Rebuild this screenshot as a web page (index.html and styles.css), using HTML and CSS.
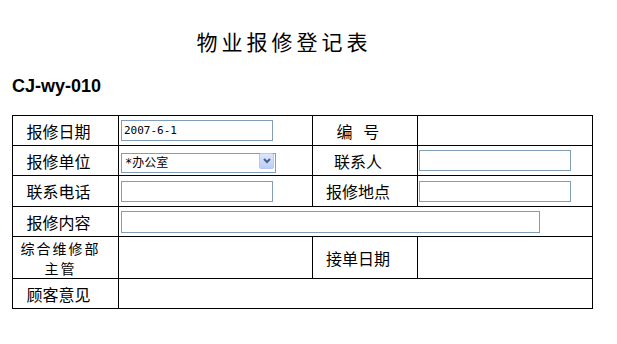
FILE: index.html
```html
<!DOCTYPE html>
<html lang="zh-CN">
<head>
    <meta charset="UTF-8">
    <title>物业报修登记表</title>
    <link rel="stylesheet" href="styles.css">
</head>
<body>
    <div class="page">
        <div class="title">物业报修登记表</div>
        <div class="code">CJ-wy-010</div>
        <table class="form-table">
            <colgroup>
                <col class="c1"><col class="c2"><col class="c3"><col class="c4">
            </colgroup>
            <tr>
                <td class="label">报修日期</td>
                <td class="field"><input class="txt" type="text" value="2007-6-1"></td>
                <td class="label">编&nbsp;&nbsp;&nbsp;号</td>
                <td class="field"></td>
            </tr>
            <tr>
                <td class="label">报修单位</td>
                <td class="field">
                    <span class="select-wrap">
                        <select class="sel">
                            <option>*办公室</option>
                        </select>
                        <span class="sel-btn">
                            <svg width="8" height="6" viewBox="0 0 8 6"><path d="M1 1 L4 4 L7 1" fill="none" stroke="#4d6185" stroke-width="2"/></svg>
                        </span>
                    </span>
                </td>
                <td class="label">联系人</td>
                <td class="field right"><input class="txt" type="text"></td>
            </tr>
            <tr class="tall1">
                <td class="label">联系电话</td>
                <td class="field"><input class="txt" type="text"></td>
                <td class="label">报修地点</td>
                <td class="field right"><input class="txt" type="text"></td>
            </tr>
            <tr>
                <td class="label">报修内容</td>
                <td class="field" colspan="3"><input class="txt wide" type="text"></td>
            </tr>
            <tr class="tall2">
                <td class="label multi">综合维修部<br>主管</td>
                <td class="field"></td>
                <td class="label">接单日期</td>
                <td class="field"></td>
            </tr>
            <tr>
                <td class="label">顾客意见</td>
                <td class="field" colspan="3"></td>
            </tr>
        </table>
    </div>
</body>
</html>
```

FILE: styles.css
```css
body {
    margin: 0;
    background: #fff;
    color: #000;
    font-family: "Noto Sans CJK SC", sans-serif;
}
.page {
    padding: 0 25px 0 12px;
}
.title {
    margin-top: 28px;
    height: 26px;
    line-height: 26px;
    font-size: 21px;
    letter-spacing: 4px;
    text-align: center;
    padding-right: 36px;
}
.code {
    margin-top: 22px;
    height: 20px;
    line-height: 20px;
    font-family: "Liberation Sans", Arial, sans-serif;
    font-weight: bold;
    font-size: 18px;
}
.form-table {
    margin-top: 19px;
    border-collapse: collapse;
    table-layout: fixed;
    width: 580px;
}
.c1 { width: 106px; }
.c2 { width: 194px; }
.c3 { width: 105px; }
.c4 { width: 175px; }
.form-table td {
    border: 1px solid #000;
    height: 29px;
    padding: 0;
    font-size: 16px;
    line-height: 18px;
    vertical-align: middle;
}
.form-table tr.tall1 td { height: 30px; }
.form-table tr.tall2 td { height: 41px; }
.label {
    text-align: center;
    padding-right: 14px !important;
}
.label.multi {
    padding-right: 10px !important;
    font-size: 14px !important;
    letter-spacing: 2px;
    line-height: 20px !important;
}
.field {
    padding-left: 2px !important;
}
.field.right {
    padding-left: 1px !important;
}
.txt {
    display: block;
    box-sizing: border-box;
    width: 152px;
    height: 21px;
    margin: 0;
    padding: 0 2px;
    border: 1px solid #7f9db9;
    background: #fff;
    font-family: "DejaVu Sans Mono", "Noto Sans CJK SC", monospace;
    font-size: 11px;
    color: #000;
}
.txt.wide {
    width: 419px;
    height: 22px;
}
.select-wrap {
    position: relative;
    display: block;
    width: 155px;
    height: 20px;
}
.sel {
    -webkit-appearance: none;
    appearance: none;
    box-sizing: border-box;
    width: 155px;
    height: 20px;
    margin: 0;
    padding: 0 0 0 3px;
    border: 1px solid #7f9db9;
    border-radius: 0;
    background: #fff;
    font-family: "DejaVu Sans Mono", "Noto Sans CJK SC", monospace;
    font-size: 12px;
    color: #000;
}
.sel-btn {
    position: absolute;
    top: 2px;
    right: 2px;
    width: 15px;
    height: 16px;
    box-sizing: border-box;
    border: 1px solid #b7c9f2;
    border-radius: 2px;
    background: linear-gradient(to bottom, #dce6fd, #bccdf8);
    display: flex;
    align-items: center;
    justify-content: center;
}
```
